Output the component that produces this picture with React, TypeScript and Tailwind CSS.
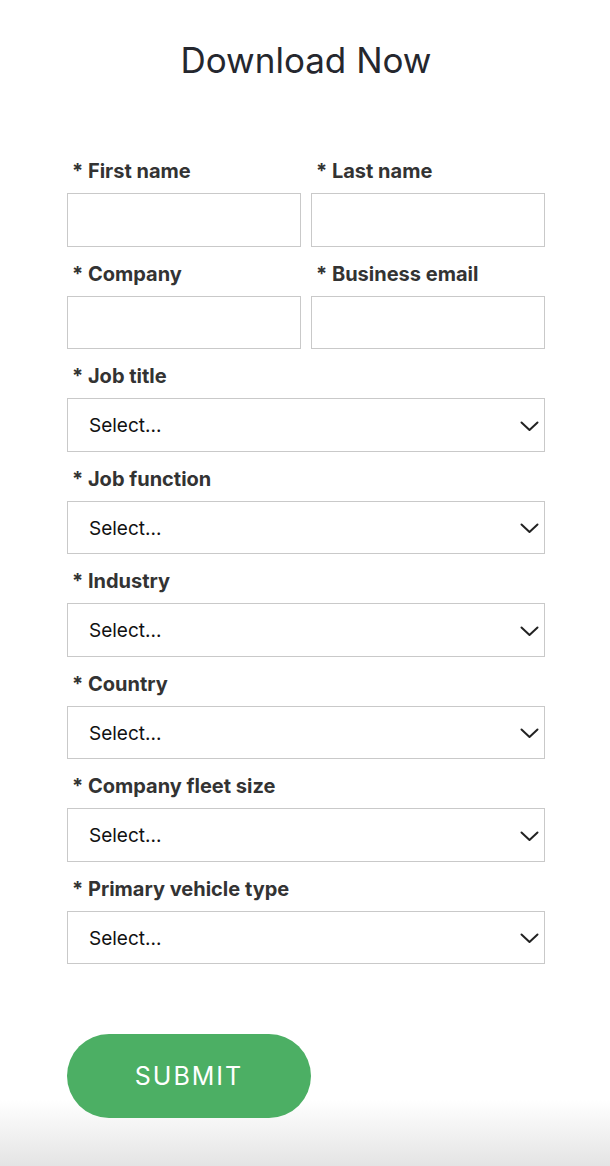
import React from "react";

const font = { fontFamily: "Inter, 'Noto Sans', sans-serif" };

function Label({ children }: { children: React.ReactNode }) {
  return (
    <div className="h-6 pl-[5px] pt-[1px] text-[20px] leading-6 font-bold text-[#333333] whitespace-nowrap">
      * {children}
    </div>
  );
}

function TextField({ label }: { label: string }) {
  return (
    <div className="flex flex-col">
      <Label>{label}</Label>
      <input
        type="text"
        className="mt-[11px] h-[53.5px] w-full border border-[#c9c9c9] bg-white outline-none"
      />
    </div>
  );
}

function SelectField({ label }: { label: string }) {
  return (
    <div className="mt-[14px] flex flex-col">
      <Label>{label}</Label>
      <div className="mt-[11px] flex h-[53.5px] w-full items-center justify-between border border-[#c9c9c9] bg-white pl-[21px] pr-[5px]">
        <span className="pt-[3px] text-[19px] text-[#111111]">Select...</span>
        <svg width="19" height="14" viewBox="0 0 19 14" className="mt-[2px]">
          <path d="M1.5 3.5 L9.5 11 L17.5 3.5" fill="none" stroke="#222222" strokeWidth="2" strokeLinecap="round" strokeLinejoin="round" />
        </svg>
      </div>
    </div>
  );
}

export default function App() {
  return (
    <div
      className="min-h-[1166px] w-full bg-[linear-gradient(to_bottom,#ffffff_1100px,#e4e4e4_1166px)]"
      style={font}
    >
      <div className="ml-[67px] w-[478px] pt-[38px]">
        <h1 className="text-center text-[35px] leading-[44px] font-normal text-[#25272e]">Download Now</h1>
        <div className="mt-[76px] grid grid-cols-2 gap-x-[10px] gap-y-[14px]">
          <TextField label="First name" />
          <TextField label="Last name" />
          <TextField label="Company" />
          <TextField label="Business email" />
        </div>
        <SelectField label="Job title" />
        <SelectField label="Job function" />
        <SelectField label="Industry" />
        <SelectField label="Country" />
        <SelectField label="Company fleet size" />
        <SelectField label="Primary vehicle type" />
        <button
          type="button"
          className="mt-[70px] flex h-[84px] w-[244px] items-center justify-center rounded-full bg-[#4caf64] pt-[2px] text-[25px] tracking-[2px] text-white"
        >
          SUBMIT
        </button>
      </div>
    </div>
  );
}
